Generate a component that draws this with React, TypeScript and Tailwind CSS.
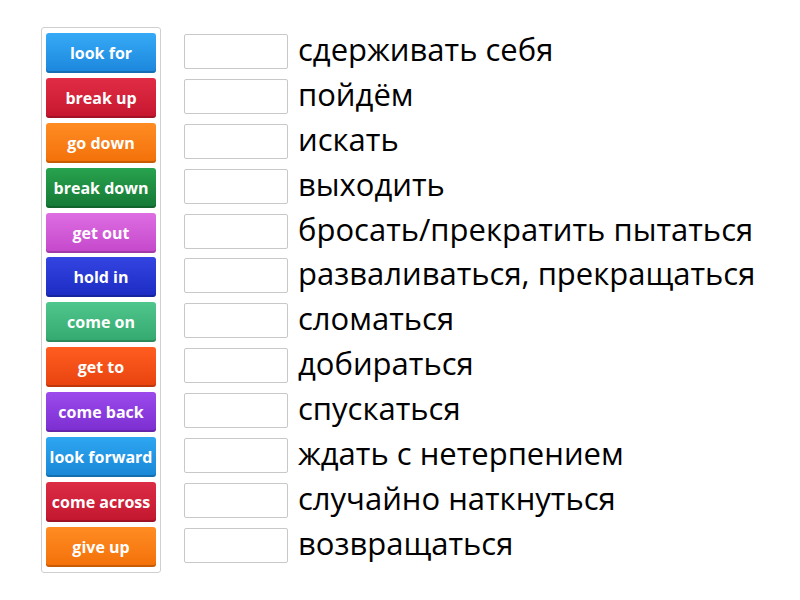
import React from "react";

const items: { label: string; cls: string }[] = [
  { label: "look for", cls: "bg-gradient-to-b from-[#36aaf6] to-[#1b86dc]" },
  { label: "break up", cls: "bg-gradient-to-b from-[#e22c46] to-[#c5152e]" },
  { label: "go down", cls: "bg-gradient-to-b from-[#ff8c22] to-[#f37006]" },
  { label: "break down", cls: "bg-gradient-to-b from-[#28a34e] to-[#157835]" },
  { label: "get out", cls: "bg-gradient-to-b from-[#de6de2] to-[#c447cb]" },
  { label: "hold in", cls: "bg-gradient-to-b from-[#3444e2] to-[#1b2bc2]" },
  { label: "come on", cls: "bg-gradient-to-b from-[#4fc68c] to-[#34a96f]" },
  { label: "get to", cls: "bg-gradient-to-b from-[#ff5d20] to-[#e8420e]" },
  { label: "come back", cls: "bg-gradient-to-b from-[#9c4aec] to-[#7b2dd0]" },
  { label: "look forward", cls: "bg-gradient-to-b from-[#2ea6f1] to-[#1887d6]" },
  { label: "come across", cls: "bg-gradient-to-b from-[#dc2c46] to-[#c2152e]" },
  { label: "give up", cls: "bg-gradient-to-b from-[#ff8c22] to-[#f37006]" },
];

const defs = [
  "сдерживать себя",
  "пойдём",
  "искать",
  "выходить",
  "бросать/прекратить пытаться",
  "разваливаться, прекращаться",
  "сломаться",
  "добираться",
  "спускаться",
  "ждать с нетерпением",
  "случайно наткнуться",
  "возвращаться",
];

export default function App() {
  return (
    <div className="w-[800px] h-[600px] bg-white flex items-start pl-[41px] pt-[27px]">
      <div className="w-[120px] border border-[#cfcfcf] rounded-[3px] bg-white pl-[4px] pr-[4px] pt-[5px] pb-[5px] flex flex-col gap-[4.9px]">
        {items.map((it) => (
          <div
            key={it.label}
            className={`h-[40px] w-[110px] rounded-[3px] flex items-center justify-center text-white font-bold text-[16px] whitespace-nowrap shadow-[inset_0_-2px_0_rgba(0,0,0,0.18)] ${it.cls}`}
            style={{ fontFamily: "'Open Sans', sans-serif" }}
          >
            {it.label}
          </div>
        ))}
      </div>
      <div className="ml-[23px] pt-[4.5px] flex flex-col gap-[4.9px]">
        {defs.map((d) => (
          <div key={d} className="h-[40px] flex items-center">
            <div className="w-[104px] h-[35px] border border-[#c8c8c8] rounded-[2px] bg-white shrink-0" />
            <span
              className="ml-[10px] text-[31px] text-black leading-none whitespace-nowrap -mt-[4px]"
              style={{ fontFamily: "'Open Sans', sans-serif" }}
            >
              {d}
            </span>
          </div>
        ))}
      </div>
    </div>
  );
}
